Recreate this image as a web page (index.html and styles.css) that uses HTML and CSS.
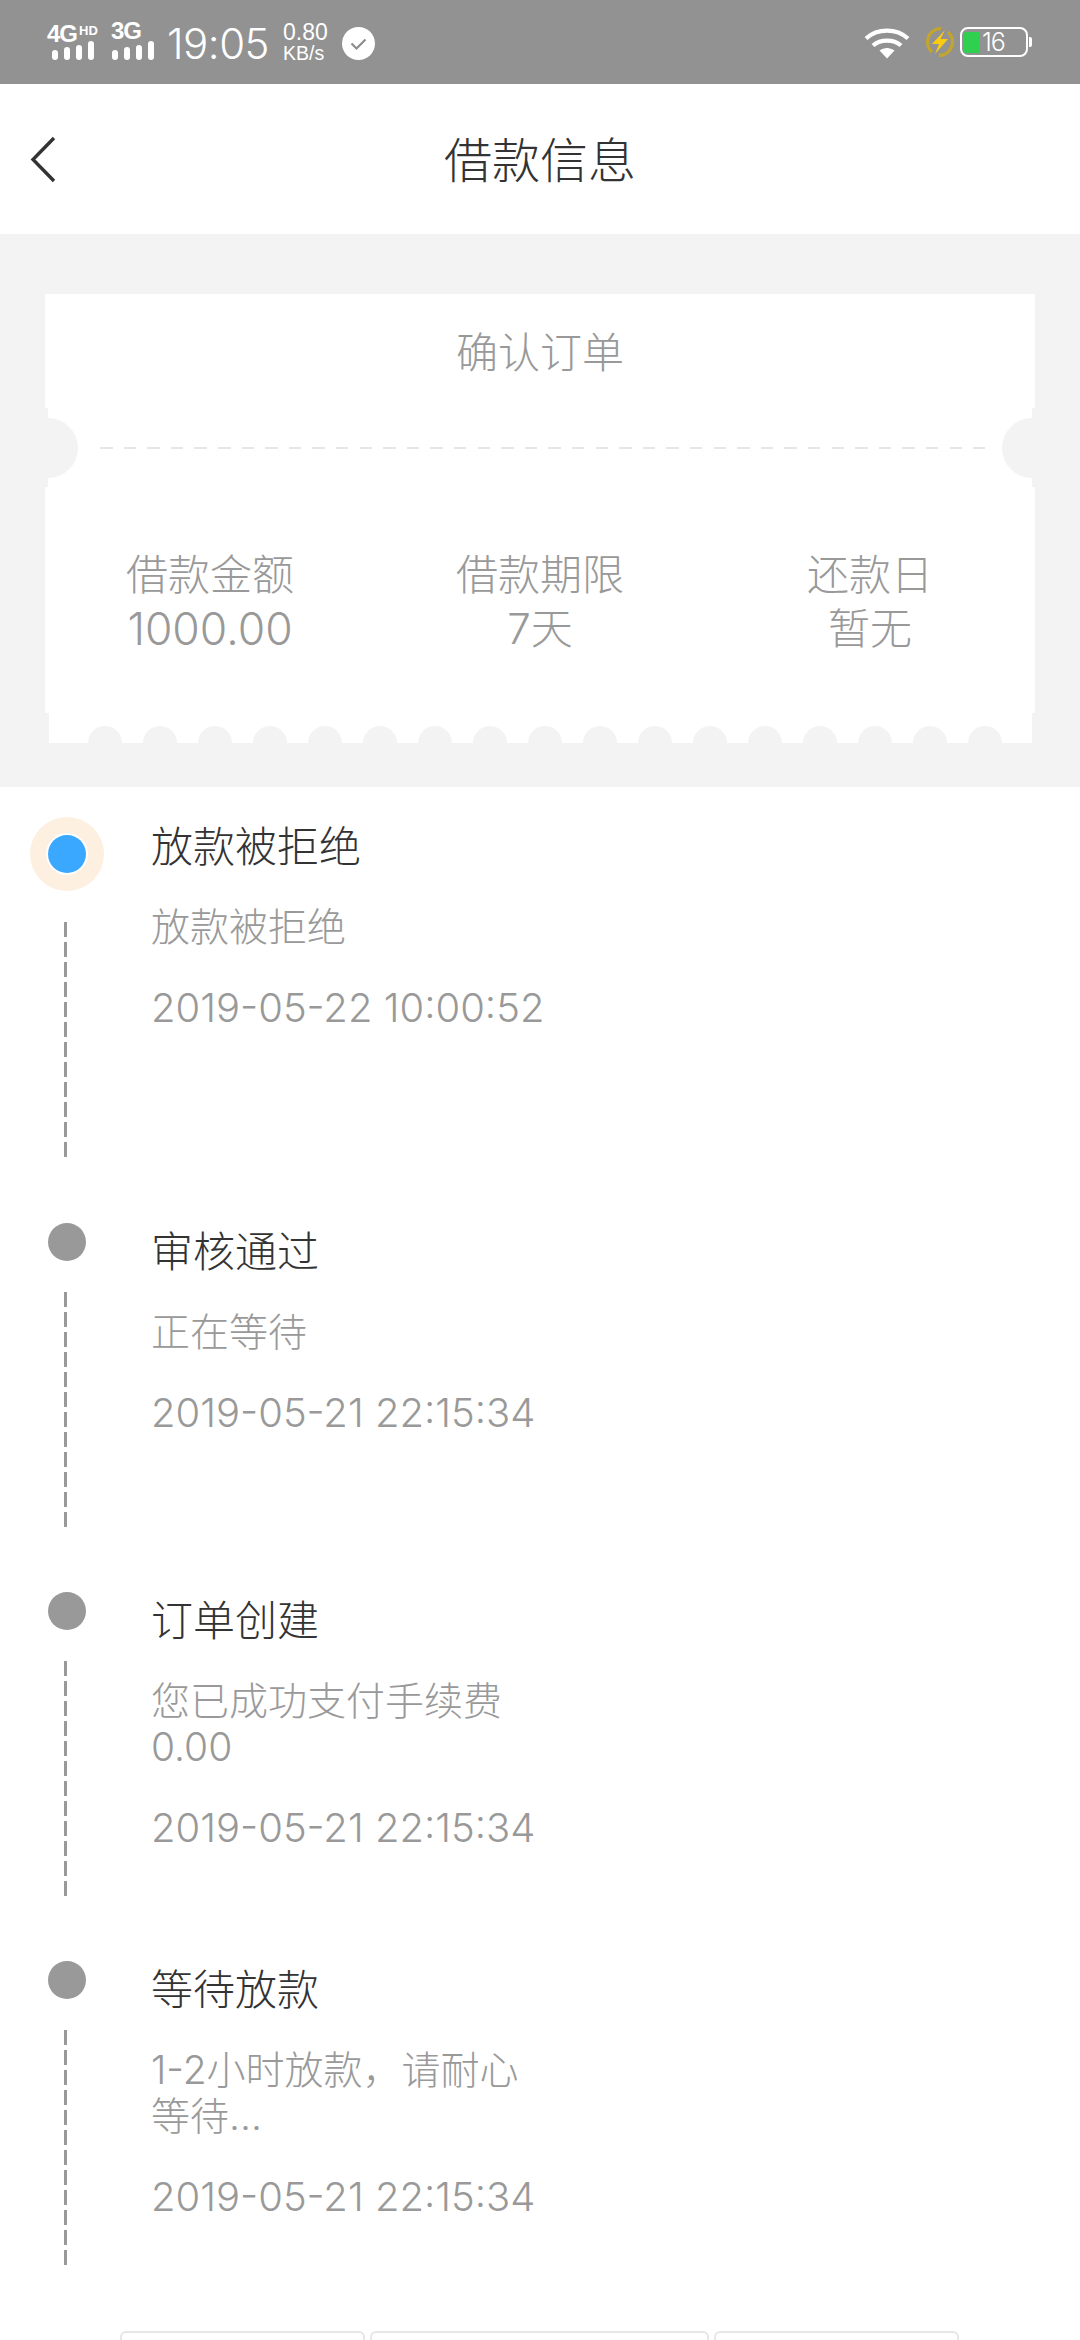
FILE: index.html
```html
<!DOCTYPE html>
<html lang="zh-CN">
<head>
<meta charset="utf-8">
<title>借款信息</title>
<link rel="stylesheet" href="styles.css">
</head>
<body>
<div class="page">
  <header class="status">
    <div class="status-left">
      <div class="net net-4g">
        <div class="net-label"><b>4G</b><b class="hd">HD</b></div>
        <div class="bars"><i class="b1"></i><i class="b2"></i><i class="b3"></i><i class="b4"></i></div>
      </div>
      <div class="net net-3g">
        <div class="net-label"><b>3G</b></div>
        <div class="bars"><i class="b1"></i><i class="b2"></i><i class="b3"></i><i class="b4"></i></div>
      </div>
      <span class="time">19:05</span>
      <div class="speed"><span>0.80</span><span class="unit">KB/s</span></div>
      <svg class="check" viewBox="0 0 33 33" width="33" height="33"><circle cx="16.500" cy="16.500" r="16.500" fill="#fff"/><path d="M9.500 16.500l5 5 9-9" fill="none" stroke="#8d8d8d" stroke-width="2.200"/></svg>
    </div>
    <div class="status-right">
      <svg class="wifi" viewBox="0 0 46 32" width="46" height="32"><g fill="none" stroke="#fff" stroke-width="4.200"><path d="M2 11.500C13.500 1 32.500 1 44 11.500"/><path d="M9 18.500C16.500 12 29.500 12 37 18.500"/></g><path d="M15.500 23.500C20 20 26 20 30.500 23.500L23 31.500Z" fill="#fff"/></svg>
      <svg class="charge" viewBox="0 0 32 32" width="32" height="32"><path d="M8 26A13.500 13.500 0 0 1 17 2.500" fill="none" stroke="#c2a431" stroke-width="3.400"/><path d="M24 6A13.500 13.500 0 0 1 15 29.500" fill="none" stroke="#c2a431" stroke-width="3.400"/><path d="M21 4L8 18h7l-4 10 13-15h-7.500z" fill="#fbcb12"/></svg>
      <div class="battery"><div class="cell"><span class="level"></span><span class="pct">16</span></div><span class="nub"></span></div>
    </div>
  </header>

  <nav class="nav">
    <svg class="back" viewBox="0 0 30 48" width="30" height="48"><path d="M26 3L5 24.500 26 46" fill="none" stroke="#333" stroke-width="3.400"/></svg>
    <h1 class="nav-title">借款信息</h1>
  </nav>

  <section class="band">
    <div class="ticket">
      <svg class="ticket-bg" viewBox="0 0 990 449" width="990" height="449" aria-hidden="true">
        <path fill="#fff" d="M0 0H990V114H987V124A30 30 0 0 0 987 184V193H990V419H987V449H957A17 17 0 0 0 923 449H902A17 17 0 0 0 868 449H847A17 17 0 0 0 813 449H792A17 17 0 0 0 758 449H737A17 17 0 0 0 703 449H682A17 17 0 0 0 648 449H627A17 17 0 0 0 593 449H572A17 17 0 0 0 538 449H517A17 17 0 0 0 483 449H462A17 17 0 0 0 428 449H407A17 17 0 0 0 373 449H352A17 17 0 0 0 318 449H297A17 17 0 0 0 263 449H242A17 17 0 0 0 208 449H187A17 17 0 0 0 153 449H132A17 17 0 0 0 98 449H77A17 17 0 0 0 43 449H4V419H0V193H3V184A30 30 0 0 0 3 124V114H0Z"/>
      </svg>
      <div class="ticket-head">确认订单</div>
      <div class="perforation"></div>
      <div class="ticket-cols">
        <div class="col"><span>借款金额</span><span class="num">1000.00</span></div>
        <div class="col"><span>借款期限</span><span>7天</span></div>
        <div class="col"><span>还款日</span><span>暂无</span></div>
      </div>
    </div>
  </section>

  <ol class="steps">
    <li class="step step-active">
      <div class="rail"><span class="dot"></span><span class="dash"></span></div>
      <div class="body">
        <h2>放款被拒绝</h2>
        <p class="msg">放款被拒绝</p>
        <p class="date">2019-05-22 10:00:52</p>
      </div>
    </li>
    <li class="step">
      <div class="rail"><span class="dot"></span><span class="dash"></span></div>
      <div class="body">
        <h2>审核通过</h2>
        <p class="msg">正在等待</p>
        <p class="date">2019-05-21 22:15:34</p>
      </div>
    </li>
    <li class="step">
      <div class="rail"><span class="dot"></span><span class="dash"></span></div>
      <div class="body">
        <h2>订单创建</h2>
        <p class="msg">您已成功支付手续费<br>0.00</p>
        <p class="date">2019-05-21 22:15:34</p>
      </div>
    </li>
    <li class="step">
      <div class="rail"><span class="dot"></span><span class="dash"></span></div>
      <div class="body">
        <h2>等待放款</h2>
        <p class="msg">1-2小时放款，请耐心<br>等待...</p>
        <p class="date">2019-05-21 22:15:34</p>
      </div>
    </li>
  </ol>

  <div class="tabs"><span class="tab t1"></span><span class="tab t2"></span><span class="tab t3"></span></div>
</div>
</body>
</html>
```
FILE: styles.css
```css
* { box-sizing: border-box; }
html, body { margin: 0; padding: 0; background: #fff; }
body { font-family: Inter, "Noto Sans CJK SC", "Noto Sans", sans-serif; font-weight: 300; }
.page { width: 1080px; height: 2340px; overflow: hidden; display: flex; flex-direction: column; background: #fff; }

.status { height: 84px; background: #929292; display: flex; justify-content: space-between; align-items: center; padding: 0 48px 0 47px; color: #fff; font-family: "Liberation Sans", sans-serif; font-weight: 400; }
.status-left, .status-right { display: flex; align-items: center; }
.net { display: flex; flex-direction: column; align-items: flex-start; margin-bottom: 4px; }
.net-4g { width: 64px; }
.net-3g { width: 56px; }
.net-label { height: 20px; line-height: 20px; font-size: 24px; white-space: nowrap; letter-spacing: -1px; }
.net-label .hd { font-size: 13px; vertical-align: 7px; letter-spacing: 0; margin-left: 2px; }
.bars { display: flex; gap: 6px; align-items: flex-end; height: 19px; }
.net-4g .bars { margin-left: 5px; }
.net-3g .bars { margin-left: 1px; }
.bars i { display: block; width: 6px; background: #fff; border-radius: 3px; }
.bars .b1 { height: 10px; }
.bars .b2 { height: 13px; }
.bars .b3 { height: 15px; }
.bars .b4 { height: 19px; }
.time { font-size: 42px; font-family: Inter, sans-serif; font-weight: 300; letter-spacing: -0.500px; margin-right: 14px; line-height: 1; margin-top: 3px; }
.speed { display: flex; flex-direction: column; font-size: 23px; line-height: 21px; width: 59px; align-items: flex-start; margin-top: 2px; }
.speed .unit { font-size: 19.500px; }
.check { margin-top: 3px; }
.wifi { margin-right: 14px; margin-top: 1px; }
.charge { margin-right: 4px; }
.battery { display: flex; align-items: center; }
.cell { width: 68px; height: 30px; border: 2px solid #fff; border-radius: 8px; display: flex; align-items: center; padding-left: 2px; }
.level { width: 15px; height: 21px; background: #2fcf50; border-radius: 2px 0 0 2px; }
.pct { font-size: 25px; margin-left: 3px; font-family: Inter, sans-serif; font-weight: 300; letter-spacing: -1px; }
.nub { width: 3px; height: 10px; background: #fff; border-radius: 0 2px 2px 0; margin-left: 1px; }

.nav { height: 150px; position: relative; display: flex; align-items: center; justify-content: center; background: #fff; }
.back { position: absolute; left: 28px; top: 51px; }
.nav-title { margin: 3px 0 0; font-size: 48px; font-weight: 300; color: #333; line-height: 1; }

.band { height: 553px; background: #f3f3f3; padding: 60px 45px 0; }
.ticket { position: relative; width: 990px; height: 449px; }
.ticket-bg { position: absolute; left: 0; top: 0; display: block; }
.ticket-head { position: relative; height: 153px; padding-top: 34px; text-align: center; font-size: 42px; line-height: 50px; color: #999; }
.perforation { position: relative; height: 2px; margin: 0 50px 0 55px; background: repeating-linear-gradient(to right, #e6e6e6 0 12.500px, transparent 12.500px 23.600px); }
.ticket-cols { position: relative; display: grid; grid-template-columns: repeat(3, 1fr); padding-top: 99px; }
.col { display: flex; flex-direction: column; align-items: center; font-size: 42px; line-height: 54px; color: #999; }
.col .num { font-size: 44.500px; }

.steps { list-style: none; margin: 0; padding: 30px 0 0; display: flex; flex-direction: column; }
.step { display: flex; height: 369px; }
.step-active { height: 387px; }
.rail { width: 151px; position: relative; flex: none; }
.dot { position: absolute; left: 48px; top: 19px; width: 38px; height: 38px; border-radius: 50%; background: #999; }
.step-active .dot { top: 18px; background: #3aa8ff; box-shadow: 0 0 0 2px #fff, 0 0 0 18px #fdf0e0; }
.dash { position: absolute; left: 64px; top: 88px; width: 3px; height: 236px; background: repeating-linear-gradient(to bottom, #999 0 15px, transparent 15px 20px); }
.step-active .dash { top: 105px; }
.body { flex: 1; padding-top: 21px; }
.step-active .body { padding-top: 3px; }
.body h2 { margin: 0; font-size: 42px; font-weight: 300; line-height: 54px; color: #333; }
.msg { margin: 30px 0 0; font-size: 39px; line-height: 46px; color: #999; }
.date { margin: 35px 0 0; font-size: 40px; line-height: 46px; color: #999; }

.tabs { display: flex; gap: 5px; padding-left: 120px; margin-top: auto; height: 9px; }
.tab { height: 20px; border: 2px solid #e6e6e6; border-radius: 6px 6px 0 0; background: #fff; }
.t1 { width: 245px; }
.t2 { width: 339px; }
.t3 { width: 245px; }
```
